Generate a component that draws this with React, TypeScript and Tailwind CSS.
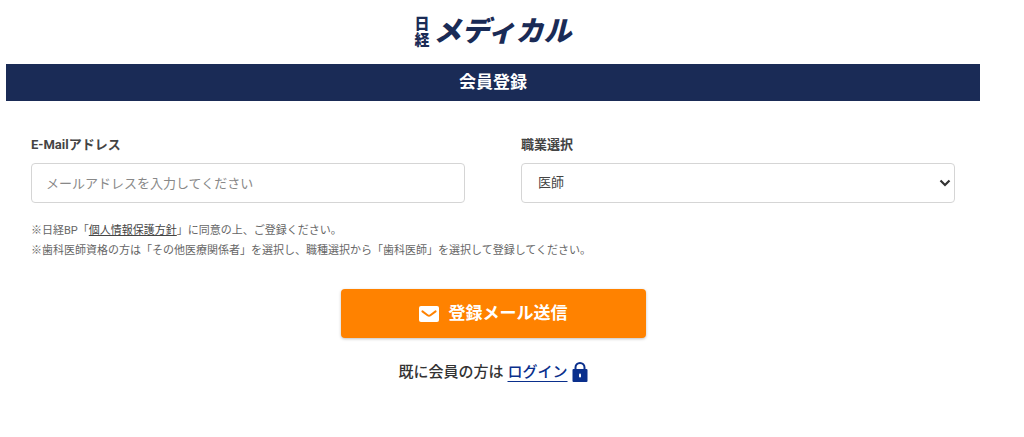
import type { ReactNode } from "react";

interface FieldProps {
  id: string;
  label: string;
  children: ReactNode;
}

function Field({ id, label, children }: FieldProps) {
  return (
    <div className="flex-1">
      <label htmlFor={id} className="mb-2 block text-[13px] leading-5 font-bold text-[#444]">
        {label}
      </label>
      {children}
    </div>
  );
}

function Logo() {
  return (
    <a href="#" className="flex h-8 items-center gap-1 font-black text-[#1a2b56]">
      <span className="flex flex-col text-[15px] leading-4">
        <span>日</span>
        <span>経</span>
      </span>
      <span className="text-[28px] leading-8 italic">メディカル</span>
    </a>
  );
}

function MailIcon() {
  return (
    <svg viewBox="0 0 20 16" className="h-4 w-5" aria-hidden="true">
      <rect width="20" height="16" rx="2" fill="#fff" />
      <path
        d="M3.4 5.4 L8.6 9.2 Q10 10.2 11.4 9.2 L16.6 5.4"
        fill="none"
        stroke="#ff8200"
        strokeWidth="2"
        strokeLinecap="round"
      />
    </svg>
  );
}

function LockIcon() {
  return (
    <svg viewBox="0 0 16 20" className="h-5 w-4" aria-hidden="true">
      <path d="M3.5 9 V5.5 a4.5 4.5 0 0 1 9 0 V9" fill="none" stroke="#0a2f8c" strokeWidth="2" />
      <rect x="0.5" y="7" width="15" height="13" rx="1" fill="#0a2f8c" />
      <rect x="7" y="11.5" width="2" height="4" rx="1" fill="#fff" />
    </svg>
  );
}

export default function App() {
  return (
    <div className="bg-white pr-11 pl-1.5 font-[Roboto,'Noto_Sans_CJK_JP',sans-serif] text-[#444]">
      <header className="flex h-16 items-center justify-center">
        <Logo />
      </header>

      <h1 className="bg-[#1a2b56] pt-1.5 pb-[7px] text-center text-[17px] leading-6 font-bold text-white">
        会員登録
      </h1>

      <form className="px-[25px] pt-[34px]" onSubmit={(e) => e.preventDefault()}>
        <div className="flex gap-14">
          <Field id="email" label="E-Mailアドレス">
            <input
              id="email"
              type="email"
              placeholder="メールアドレスを入力してください"
              className="h-10 w-full rounded border border-[#d5d5d5] bg-white px-3.5 text-[13px] placeholder:text-[#888]"
            />
          </Field>
          <Field id="job" label="職業選択">
            <div className="relative">
              <select
                id="job"
                defaultValue="医師"
                className="h-10 w-full appearance-none rounded border border-[#d5d5d5] bg-white px-4 text-[13px] text-[#444]"
              >
                <option>医師</option>
                <option>その他医療関係者</option>
              </select>
              <svg
                viewBox="0 0 12 8"
                className="pointer-events-none absolute top-4 right-1 h-2 w-3"
                aria-hidden="true"
              >
                <path d="M1.5 1.5 L6 6 L10.5 1.5" fill="none" stroke="#333" strokeWidth="2.2" />
              </svg>
            </div>
          </Field>
        </div>

        <div className="mt-[18px] text-[11px] leading-5 text-[#666]">
          <p>
            ※日経BP「
            <a href="#" className="text-[#444] underline">
              個人情報保護方針
            </a>
            」に同意の上、ご登録ください。
          </p>
          <p>※歯科医師資格の方は「その他医療関係者」を選択し、職種選択から「歯科医師」を選択して登録してください。</p>
        </div>

        <button
          type="submit"
          className="mx-auto mt-7 flex h-[49px] w-full max-w-[305px] items-center justify-center gap-2.5 rounded bg-[#ff8200] text-[17px] font-bold text-white shadow-[0_1px_3px_rgba(0,0,0,0.25)]"
        >
          <MailIcon />
          登録メール送信
        </button>
      </form>

      <p className="mt-6 flex items-center justify-center gap-1 text-[15px] leading-5 font-medium text-[#333]">
        既に会員の方は
        <a href="#" className="text-[#0a2f8c] underline decoration-[#0a2f8c] underline-offset-4">
          ログイン
        </a>
        <LockIcon />
      </p>
    </div>
  );
}
